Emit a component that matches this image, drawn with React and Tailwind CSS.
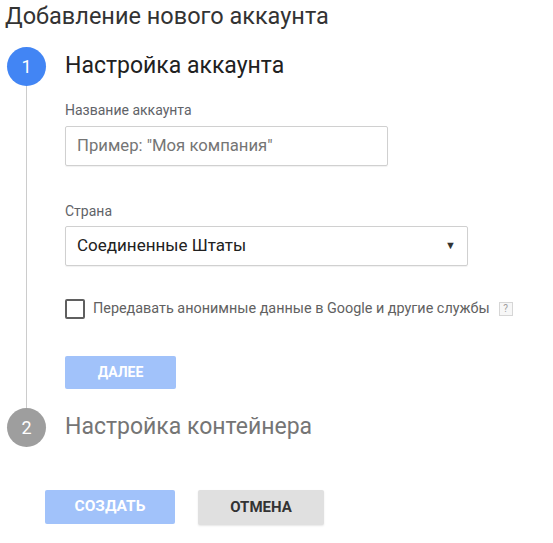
import React from 'react';

const font = { fontFamily: 'Roboto, "Noto Sans", sans-serif' };

function StepBadge({ n, active }) {
  return (
    <div
      className={`w-[39px] h-[39px] rounded-full flex items-center justify-center text-white text-[18px] shrink-0 ${
        active ? 'bg-[#4285f4]' : 'bg-[#9e9e9e]'
      }`}
    >
      {n}
    </div>
  );
}

export default function App() {
  return (
    <div className="w-[553px] h-[543px] bg-white font-['Roboto',sans-serif]" style={font}>
      <h1 className="pl-[5px] pt-[1px] text-[23.5px] leading-[30px] text-[#333333]">
        Добавление нового аккаунта
      </h1>

      {/* step 1 header */}
      <div className="flex items-center mt-[16px] pl-[7px]">
        <StepBadge n="1" active />
        <div className="ml-[19px] text-[23px] text-[#212121]">Настройка аккаунта</div>
      </div>

      {/* step 1 body with the connector line */}
      <div className="ml-[26px] border-l border-[#cccccc] pl-[38px] pt-[16px] pb-[19px]">
        <label className="block text-[14px] text-[#5f6368] leading-[16px]">Название аккаунта</label>
        <div className="mt-[8px] w-[323px] h-[40px] border border-[#d0d0d0] rounded-[2px] flex items-center px-[11px] shadow-[0_1px_1px_rgba(0,0,0,0.06)]">
          <span className="text-[16.7px] text-[#757575]">Пример: "Моя компания"</span>
        </div>

        <label className="block mt-[37px] text-[14px] text-[#5f6368] leading-[16px]">Страна</label>
        <div className="mt-[7px] w-[403px] h-[40px] border border-[#d0d0d0] rounded-[2px] flex items-center justify-between px-[11px] shadow-[0_1px_1px_rgba(0,0,0,0.06)]">
          <span className="text-[17px] text-[#212121]">Соединенные Штаты</span>
          <span className="text-[11px] text-[#333]">▼</span>
        </div>

        <div className="flex items-center mt-[32px]">
          <div className="w-[20px] h-[20px] border-2 border-[#5f5f5f] rounded-[2px]" />
          <span className="ml-[8px] text-[14.4px] text-[#616161]">
            Передавать анонимные данные в Google и другие службы
          </span>
          <span className="ml-[9px] w-[14px] h-[14px] border border-[#d6d6d6] bg-[#f7f7f7] text-[10px] text-[#9e9e9e] flex items-center justify-center leading-none">
            ?
          </span>
        </div>

        <button className="mt-[36px] w-[111px] h-[33px] rounded-[2px] bg-[#a1c2fa] text-white text-[14px] font-bold">
          ДАЛЕЕ
        </button>
      </div>

      {/* step 2 header */}
      <div className="flex items-center pl-[7px]">
        <StepBadge n="2" />
        <div className="ml-[19px] text-[23px] text-[#757575]">Настройка контейнера</div>
      </div>

      <div className="flex gap-[23px] pl-[45px] mt-[43px]">
        <button className="w-[130px] h-[34px] rounded-[2px] bg-[#a1c2fa] text-white text-[15.5px] font-bold">
          СОЗДАТЬ
        </button>
        <button className="w-[126px] h-[35px] rounded-[2px] bg-[#e0e0e0] text-[#333333] text-[15px] font-bold shadow-[0_1px_2px_rgba(0,0,0,0.1)]">
          ОТМЕНА
        </button>
      </div>
    </div>
  );
}
